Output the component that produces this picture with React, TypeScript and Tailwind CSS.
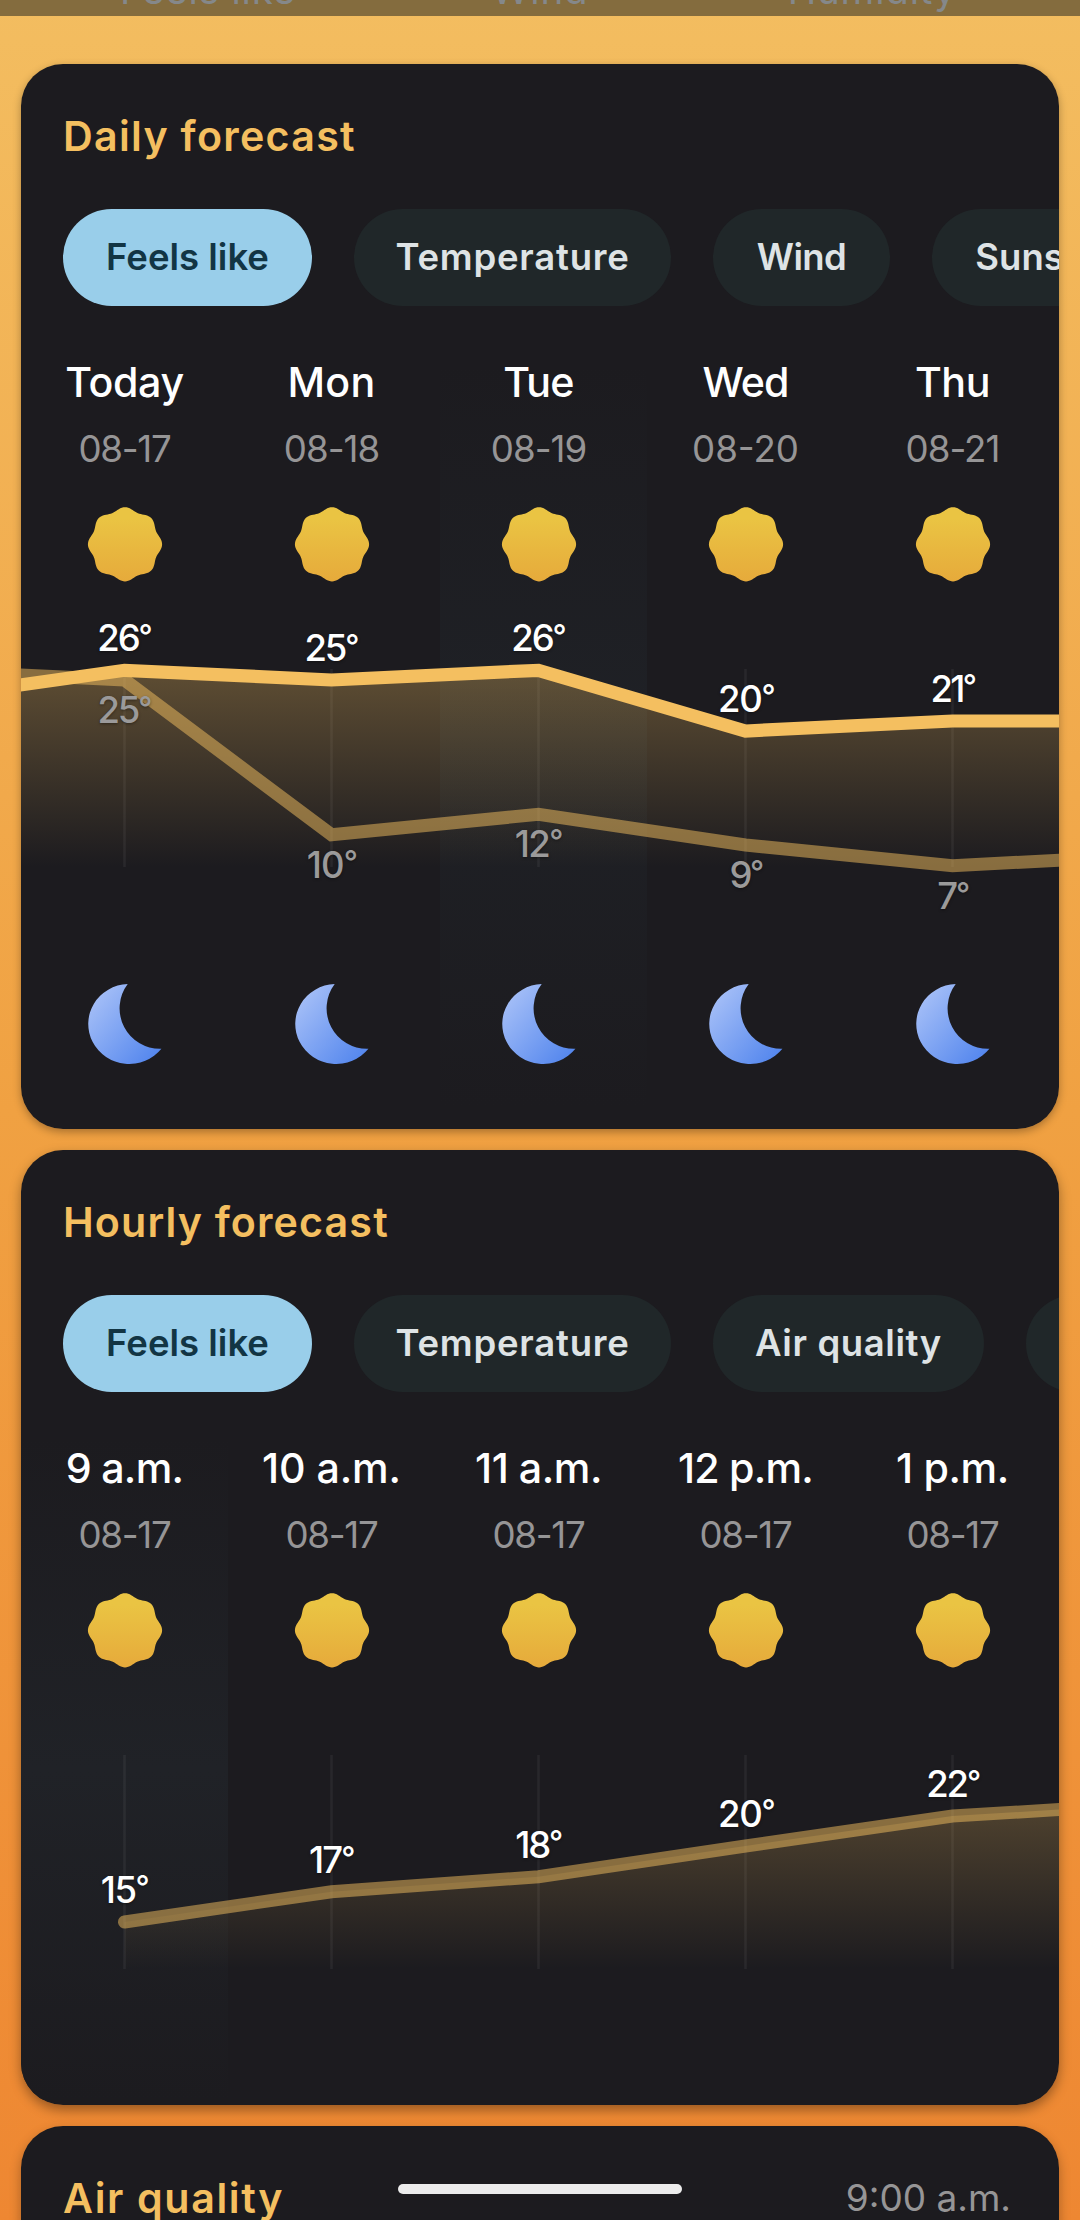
import React from 'react'

type ChipData = { text: string; className: string }
type Column = { label: string; labelClass: string; date: string; dateClass: string }
type Temp = { value: string; x: number; y: number; spacing: number; muted?: boolean }

const CENTERS = [103.5, 310.5, 517.5, 724.5, 931.5]

const dailyChips: ChipData[] = [
  { text: 'Feels like', className: 'w-[249px] bg-[#99ceea] text-[#123544]' },
  { text: 'Temperature', className: 'w-[317px] bg-[#202729] text-[#dee3e5] tracking-[0.77px]' },
  { text: 'Wind', className: 'w-[177px] bg-[#202729] text-[#dee3e5] tracking-[-0.6px]' },
  { text: 'Sunshine', className: 'w-[251px] bg-[#202729] text-[#dee3e5]' },
]

const hourlyChips: ChipData[] = [
  { text: 'Feels like', className: 'w-[249px] bg-[#99ceea] text-[#123544]' },
  { text: 'Temperature', className: 'w-[317px] bg-[#202729] text-[#dee3e5] tracking-[0.77px]' },
  { text: 'Air quality', className: 'w-[271px] bg-[#202729] text-[#dee3e5] tracking-[0.6px]' },
  { text: '', className: 'w-[177px] bg-[#202729] text-[#dee3e5]' },
]

const days: Column[] = [
  { label: 'Today', labelClass: 'tracking-[-0.4px]', date: '08-17', dateClass: 'tracking-[-1.28px]' },
  { label: 'Mon', labelClass: 'tracking-[0.2px]', date: '08-18', dateClass: 'tracking-[-1px]' },
  { label: 'Tue', labelClass: 'tracking-[-0.85px]', date: '08-19', dateClass: 'tracking-[-1px]' },
  { label: 'Wed', labelClass: 'tracking-[-0.9px]', date: '08-20', dateClass: 'tracking-normal' },
  { label: 'Thu', labelClass: 'tracking-[-0.4px]', date: '08-21', dateClass: 'tracking-[-1px]' },
]

const hours: Column[] = [
  { label: '9 a.m.', labelClass: 'tracking-[-0.7px]', date: '08-17', dateClass: 'tracking-[-1.28px]' },
  { label: '10 a.m.', labelClass: 'tracking-[-0.1px]', date: '08-17', dateClass: 'tracking-[-1.28px]' },
  { label: '11 a.m.', labelClass: 'tracking-[-0.47px]', date: '08-17', dateClass: 'tracking-[-1.28px]' },
  { label: '12 p.m.', labelClass: 'tracking-[-0.75px]', date: '08-17', dateClass: 'tracking-[-1.28px]' },
  { label: '1 p.m.', labelClass: 'tracking-[-0.35px]', date: '08-17', dateClass: 'tracking-[-1.28px]' },
]

const dailyTemps: Temp[] = [
  { value: '26', x: 104, y: 69, spacing: -2.1 },
  { value: '25', x: 311, y: 79, spacing: -2.1 },
  { value: '26', x: 518, y: 69, spacing: -2.1 },
  { value: '20', x: 725.8, y: 129.7, spacing: -1.2 },
  { value: '21', x: 932.7, y: 119.7, spacing: -2.8 },
  { value: '25', x: 104, y: 141, spacing: -2.1, muted: true },
  { value: '10', x: 311.3, y: 295.7, spacing: -0.9, muted: true },
  { value: '12', x: 518, y: 274.7, spacing: -1.6, muted: true },
  { value: '9', x: 725.8, y: 305.7, spacing: -2.6, muted: true },
  { value: '7', x: 932.7, y: 327, spacing: -2.2, muted: true },
]

const hourlyTemps: Temp[] = [
  { value: '15', x: 104.2, y: 234.7, spacing: -1.5 },
  { value: '17', x: 311.2, y: 205, spacing: -1.9 },
  { value: '18', x: 518.2, y: 189.7, spacing: -2.3 },
  { value: '20', x: 725.8, y: 158.7, spacing: -1.2 },
  { value: '22', x: 932.7, y: 129, spacing: -2.2 },
]

// Eight-lobed scalloped disc.
const sunPath =
  Array.from({ length: 144 }, (_, i) => {
    const a = (i / 144) * Math.PI * 2
    const r = 35.4 + 1.7 * Math.cos(8 * a)
    return `${i ? 'L' : 'M'}${(38 + r * Math.sin(a)).toFixed(2)} ${(38.3 - r * Math.cos(a)).toFixed(2)}`
  }).join('') + 'Z'

function Sun() {
  return (
    <svg viewBox="0 0 76 76" className="h-[76px] w-[76px]">
      <path d={sunPath} fill="url(#sun)" />
    </svg>
  )
}

function Moon() {
  return (
    <svg viewBox="0 0 76 80" className="h-20 w-[76px]">
      <path d="M40.7 0A41 40 0 1 0 74.4 64.8A40.5 40.5 0 0 1 40.7 0Z" fill="url(#moon)" />
    </svg>
  )
}

function Gradients() {
  return (
    <svg className="absolute h-0 w-0">
      <defs>
        <linearGradient id="sun" x1="0" y1="0" x2="0" y2="1">
          <stop offset="0.15" stopColor="#eac443" />
          <stop offset="1" stopColor="#e6aa3b" />
        </linearGradient>
        <linearGradient id="moon" x1="0.1" y1="0.15" x2="0.9" y2="0.9">
          <stop offset="0" stopColor="#a4bef7" />
          <stop offset="1" stopColor="#5688ee" />
        </linearGradient>
      </defs>
    </svg>
  )
}

function Chips({ items }: { items: ChipData[] }) {
  return (
    <div className="mt-[49px] flex gap-[42px] pl-[42px]">
      {items.map((c, i) => (
        <div
          key={i}
          className={`flex h-[97px] shrink-0 items-center justify-center rounded-full text-[36.5px] font-semibold whitespace-nowrap ${c.className}`}
        >
          {c.text}
        </div>
      ))}
    </div>
  )
}

function Columns({ items }: { items: Column[] }) {
  return (
    <div className="relative mt-[52px] flex">
      {items.map((c, i) => (
        <div key={i} className="flex w-[207px] shrink-0 flex-col items-center">
          <div className={`text-[41.2px] leading-[48px] font-medium whitespace-nowrap text-white ${c.labelClass}`}>{c.label}</div>
          <div className={`mt-[23px] mb-[37px] text-[36.7px] leading-[40px] text-[#969596] ${c.dateClass}`}>{c.date}</div>
          <Sun />
        </div>
      ))}
    </div>
  )
}

function Temps({ items }: { items: Temp[] }) {
  return (
    <g fontSize="36.5" fontWeight="500" textAnchor="middle">
      {items.map((t, i) => (
        <text
          key={i}
          x={t.x + t.spacing / 2}
          y={t.y}
          letterSpacing={t.spacing}
          className={t.muted ? 'fill-[#9b9a9a] [text-shadow:0_1px_3px_rgba(0,0,0,0.4)]' : 'fill-white [text-shadow:0_1px_3px_rgba(0,0,0,0.4)]'}
        >
          {t.value}
          <tspan fontSize="31" dy="-4.5">°</tspan>
        </text>
      ))}
    </g>
  )
}

function Grid({ top, bottom }: { top: number; bottom: number }) {
  return (
    <g stroke="#fff" strokeOpacity="0.055" strokeWidth="2.6">
      {CENTERS.map((x) => (
        <line key={x} x1={x} x2={x} y1={top} y2={bottom} />
      ))}
    </g>
  )
}

function DailyChart() {
  const high = '-30,107 103.5,88.3 310.5,98 517.5,88.3 724.5,149 931.5,139 1070,139'
  const low = '-30,91.5 103.5,98 310.5,252.7 517.5,232.3 724.5,263 931.5,283.7 1070,276.5'
  return (
    <svg viewBox="0 0 1038 402" className="relative block h-[402px] w-[1038px]">
      <defs>
        <linearGradient id="dailyArea" gradientUnits="userSpaceOnUse" x1="0" x2="0" y1="87" y2="285">
          <stop offset="0" stopColor="#f4bf60" stopOpacity="0.31" />
          <stop offset="1" stopColor="#f4bf60" stopOpacity="0" />
        </linearGradient>
      </defs>
      <Grid top={87} bottom={285} />
      <polygon points={`${high} 1070,285 -30,285`} fill="url(#dailyArea)" />
      <polyline points={low} fill="none" stroke="#f4bf60" strokeOpacity="0.5" strokeWidth="13" />
      <polyline points={high} fill="none" stroke="#f4bf60" strokeWidth="13.2" />
      <Temps items={dailyTemps} />
    </svg>
  )
}

function HourlyChart() {
  const line = '103.5,254 310.5,223.7 517.5,208.7 724.5,178 931.5,148 1070,139.6'
  return (
    <svg viewBox="0 0 1038 437" className="relative block h-[437px] w-[1038px]">
      <defs>
        <linearGradient id="hourlyArea" gradientUnits="userSpaceOnUse" x1="0" x2="0" y1="87" y2="301">
          <stop offset="0" stopColor="#f4bf60" stopOpacity="0.31" />
          <stop offset="1" stopColor="#f4bf60" stopOpacity="0" />
        </linearGradient>
      </defs>
      <Grid top={87} bottom={301} />
      <polygon points={`${line} 1070,301 103.5,301`} fill="url(#hourlyArea)" />
      <polyline points={line} fill="none" stroke="#f4bf60" strokeOpacity="0.5" strokeWidth="13" strokeLinecap="round" />
      <Temps items={hourlyTemps} />
    </svg>
  )
}

function Card({ className, children }: { className: string; children: React.ReactNode }) {
  return (
    <section className={`relative mx-[21px] shrink-0 rounded-[42px] ${className}`}>
      <div className="relative h-full overflow-hidden rounded-[42px] bg-[#1c1b1f] pt-12">{children}</div>
    </section>
  )
}

function Title({ className, children }: { className: string; children: React.ReactNode }) {
  return <h2 className={`text-[41.2px] leading-[48px] font-semibold whitespace-nowrap text-[#f4bf60] ${className}`}>{children}</h2>
}

export default function App() {
  return (
    <main className="relative flex h-[2220px] w-[1080px] flex-col overflow-hidden bg-linear-to-b from-[#f3bd60] via-[#f0a142] to-[#ee8732] font-['Inter',sans-serif]">
      <Gradients />
      <header className="h-4 shrink-0 overflow-hidden bg-[#846c3e] px-[42px]">
        <div className="-mt-[30px] grid grid-cols-3 text-center text-[38.5px] leading-[40px] tracking-[0.8px] text-[#85888a]">
          <span>Feels like</span>
          <span>Wind</span>
          <span>Humidity</span>
        </div>
      </header>

      <Card className="mt-12 h-[1065px] shadow-[0_3px_9px_rgba(0,0,0,0.3)]">
        <div className="absolute top-[303px] left-[419px] h-[740px] w-[207px] bg-linear-to-b from-[#1c1b1f] via-[#1f2126] to-[#1c1b1f]" />
        <Title className="ml-[42px] tracking-[1.28px]">Daily forecast</Title>
        <Chips items={dailyChips} />
        <Columns items={days} />
        <DailyChart />
        <div className="relative flex">
          {days.map((d) => (
            <div key={d.date} className="flex w-[207px] justify-center">
              <Moon />
            </div>
          ))}
        </div>
      </Card>

      <Card className="mt-[21px] h-[955px] shadow-[0_5px_12px_rgba(0,0,0,0.36)]">
        <div className="absolute top-[290px] left-0 h-[660px] w-[207px] bg-linear-to-b from-[#1c1b1f] via-[#202227] to-[#1c1b1f]" />
        <Title className="ml-[42px] tracking-[1.13px]">Hourly forecast</Title>
        <Chips items={hourlyChips} />
        <Columns items={hours} />
        <HourlyChart />
      </Card>

      <Card className="mt-[21px] h-[400px] shadow-[0_5px_12px_rgba(0,0,0,0.3)]">
        <div className="flex items-center justify-between pr-12 pl-[42px]">
          <Title className="tracking-[1.6px]">Air quality</Title>
          <span className="text-[37px] leading-[48px] text-[#969596]">9:00 a.m.</span>
        </div>
      </Card>

      <div className="absolute top-[2184px] left-[398px] h-[10px] w-[284px] rounded-full bg-[#ececec]" />
    </main>
  )
}
